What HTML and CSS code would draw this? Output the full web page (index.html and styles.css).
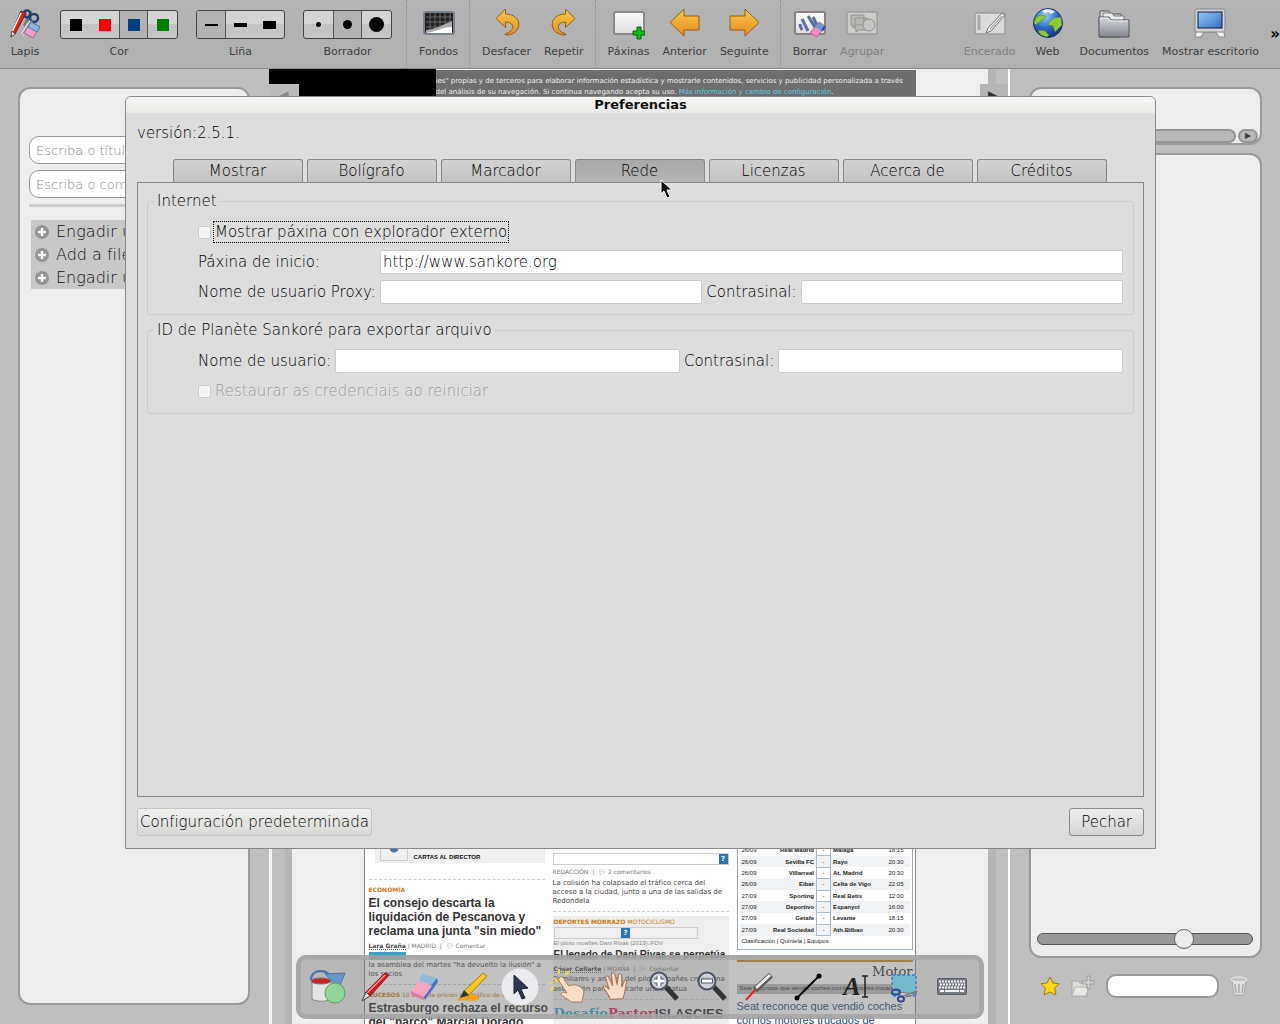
FILE: index.html
```html
<!DOCTYPE html>
<html lang="gl">
<head>
<meta charset="utf-8">
<title>Preferencias</title>
<link rel="stylesheet" href="styles.css">
</head>
<body>
<svg class="defs" width="0" height="0" aria-hidden="true">
  <defs>
    <linearGradient id="gold" x1="0" y1="0" x2="0" y2="1"><stop offset="0" stop-color="#f8c94a"/><stop offset="1" stop-color="#e58a22"/></linearGradient>
    <linearGradient id="paper" x1="0" y1="0" x2="0" y2="1"><stop offset="0" stop-color="#fdfdfd"/><stop offset="1" stop-color="#dcdcdc"/></linearGradient>
    <linearGradient id="screen" x1="0" y1="0" x2="1" y2="1"><stop offset="0" stop-color="#9cc8f4"/><stop offset="1" stop-color="#2f6cc4"/></linearGradient>
    <linearGradient id="folder" x1="0" y1="0" x2="0" y2="1"><stop offset="0" stop-color="#d6d8de"/><stop offset="1" stop-color="#84868e"/></linearGradient>
    <radialGradient id="globe" cx=".4" cy=".25" r=".8"><stop offset="0" stop-color="#9cd4f8"/><stop offset=".5" stop-color="#2f6fd0"/><stop offset="1" stop-color="#122a70"/></radialGradient>
    <symbol id="hand" viewBox="0 0 24 26"><path d="M7 24C6 19 2 16 1 13c0-2 3-1 5 2L3 5c0-2 2-2 3 0l3 7L8 2c0-2 2-2 3 0l2 9 1-8c0-2 2-2 3 0l0 10 2-5c1-2 3-1 2 1-1 5-1 9-3 14z" fill="#fbdcc4" stroke="#a9785c" stroke-width="1"/></symbol>
  </defs>
</svg>

<header class="toolbar">
  <div class="group">
    <button class="tool"><svg width="32" height="32" viewBox="0 0 32 32"><path d="M15 18 22 3M21 17 16 5" stroke="#777" stroke-width="2"/><circle cx="18" cy="6" r="3.500" fill="none" stroke="#1f4078" stroke-width="2.500"/><circle cx="25" cy="10" r="4" fill="none" stroke="#1f4078" stroke-width="2.500"/><path d="M22 13 13 27" stroke="#eee" stroke-width="3"/><path d="M22 13 13 27" stroke="#777"/><path d="M12 3l5 2L6 26l-4 3 1-6z" fill="#d8231b" stroke="#8e1c17"/><path d="M12 5 3 24" stroke="#fff" stroke-width="1.500"/><path d="M3 23l3 3-4 3z" fill="#eee" stroke="#555"/><path d="M22 14l9 5-7 11-9-5z" fill="#ee9fc6" stroke="#946b92"/><path d="M22 14l9 5-3 5-9-5z" fill="#8fb3dc" stroke="#567ba8"/></svg><span>Lapis</span></button>
    <div class="choice"><div class="cells"><button aria-label="Negro"><i class="swatch black"></i></button><button aria-label="Vermello"><i class="swatch red"></i></button><button class="on" aria-label="Azul"><i class="swatch blue"></i></button><button aria-label="Verde"><i class="swatch green"></i></button></div><span>Cor</span></div>
    <div class="choice"><div class="cells"><button class="on" aria-label="Fina"><i class="line thin"></i></button><button aria-label="Media"><i class="line medium"></i></button><button aria-label="Grosa"><i class="line thick"></i></button></div><span>Liña</span></div>
    <div class="choice"><div class="cells"><button aria-label="Pequeno"><i class="dot small"></i></button><button class="on" aria-label="Mediano"><i class="dot mid"></i></button><button aria-label="Grande"><i class="dot large"></i></button></div><span>Borrador</span></div>
  </div>
  <div class="group">
    <button class="tool"><svg width="32" height="32" viewBox="0 0 32 32"><rect x="1" y="4" width="30" height="22" rx="2" fill="#222" stroke="#7b828f" stroke-width="2"/><path d="M7 5v18M12 5v18M17 5v15M22 5v13M27 5v10M3 9h26M3 14h26M3 19h20" stroke="#777" stroke-width=".8"/><path d="M3 22c10-1 16-5 26-9v12H3z" fill="#aaa"/><path d="M3 25c9-1 16-6 26-6v6z" fill="#fff"/></svg><span>Fondos</span></button>
  </div>
  <div class="group">
    <button class="tool"><svg width="32" height="32" viewBox="0 0 32 32"><path d="M5 10.500 14.500 1v5C32 6 32 26 16 27c-2 0-3-1-1-1.500 9-2.500 9-11.500-.5-11.500v5.500z" fill="url(#gold)" stroke="#8a6016" stroke-linejoin="round"/></svg><span>Desfacer</span></button>
    <button class="tool"><svg width="32" height="32" viewBox="0 0 32 32"><path d="M27 10.500 17.500 1v5C0 6 0 26 16 27c2 0 3-1 1-1.500-9-2.500-9-11.500.5-11.500v5.500z" fill="url(#gold)" stroke="#8a6016" stroke-linejoin="round"/></svg><span>Repetir</span></button>
  </div>
  <div class="group">
    <button class="tool"><svg width="32" height="32" viewBox="0 0 32 32"><rect x="1" y="4" width="30" height="22" rx="2" fill="url(#paper)" stroke="#8b8888" stroke-width="2"/><path d="M24 19h4v4h4v4h-4v4h-4v-4h-4v-4h4z" fill="#14b814" stroke="#0a620a"/></svg><span>Páxinas</span></button>
    <button class="tool"><svg width="32" height="32" viewBox="0 0 32 32"><path d="M1 14.500 15 1v7h15v14H15v6z" fill="url(#gold)" stroke="#8a6016" stroke-linejoin="round"/></svg><span>Anterior</span></button>
    <button class="tool"><svg width="32" height="32" viewBox="0 0 32 32"><path d="M31 14.500 17 1v7H2v14h15v6z" fill="url(#gold)" stroke="#8a6016" stroke-linejoin="round"/></svg><span>Seguinte</span></button>
  </div>
  <div class="group">
    <button class="tool"><svg width="32" height="32" viewBox="0 0 32 32"><rect x="1" y="4" width="30" height="22" rx="2" fill="url(#paper)" stroke="#8b8080" stroke-width="2"/><path d="M6 16c0 2 1 4 2 6M8 11l6 12M14 8l8 13M19 9l4 8" stroke="#5b70a0" stroke-width="3" fill="none"/><path d="M25 14l6 4-8 11-7-4z" fill="#f08ac0" stroke="#c05090" stroke-width=".8"/><path d="M25 14l6 4-3 5-7-4z" fill="#6f9ac4"/><path d="M31 18l-3 5" stroke="#2048d0" stroke-width="2"/></svg><span>Borrar</span></button>
    <button class="tool" disabled><svg width="32" height="32" viewBox="0 0 32 32"><rect x="1" y="4" width="30" height="22" rx="2" fill="#cdcdcb" stroke="#a09f9d" stroke-width="1.500"/><path d="M5 7h13v10h-8l-3 3v-3H5zM9 10h12v12h-8l-3 2v-3H9z" fill="#b9b9b7" stroke="#93928f"/><circle cx="23" cy="17" r="6" fill="#c5c5c3" stroke="#93928f"/></svg><span>Agrupar</span></button>
  </div>
  <div class="group modes">
    <button class="tool" disabled><svg width="32" height="32" viewBox="0 0 32 32"><rect x="1" y="5" width="30" height="21" rx="2" fill="#dadad8" stroke="#a09f9d" stroke-width="1.500"/><path d="M5 7v15" stroke="#aaa" stroke-width="3"/><path d="M28 5l3 2-14 16-5 2 2-5z" fill="#e8e8e8" stroke="#777"/><path d="M16 21 28 8" stroke="#888"/></svg><span>Encerado</span></button>
    <button class="tool web"><svg width="32" height="32" viewBox="0 0 32 32"><circle cx="16" cy="15" r="14.500" fill="url(#globe)" stroke="#19306c"/><path d="M10 3c4-3 10-2 13 1l-4 2-3-2-3 1z" fill="#eef8ff"/><path d="M4 9l5-2 5 1-3 4-4 2-3 3-2-2zM17 14l5-4 7-1 1 8-4 4-3 3-2-6-5-1zM6 22l7 1 4 4-2 2c-5-1-8-3-9-7z" fill="#8fc83a" stroke="#4b8423" stroke-width=".6"/></svg><span>Web</span></button>
    <button class="tool"><svg width="32" height="32" viewBox="0 0 32 32"><path d="M2 29V3h9l2 3h10v23z" fill="#ddd" stroke="#55565a"/><path d="M5 28V5h9l2 3h10v20z" fill="#eee" stroke="#77787c"/><path d="M1 29V9h10l2 3h18v17z" fill="url(#folder)" stroke="#505258"/><path d="M2 10h8l2 3h18" fill="none" stroke="#eee"/></svg><span>Documentos</span></button>
    <button class="tool"><svg width="32" height="32" viewBox="0 0 32 32"><path d="M3 21 1 29h6l3-5h12l3 5h6l-2-8z" fill="#f4f4f4" stroke="#88898c"/><rect x="1" y="1" width="30" height="23" rx="2" fill="#d2d4d8" stroke="#85868b"/><rect x="4" y="4" width="24" height="16" fill="url(#screen)" stroke="#101a30"/></svg><span>Mostrar escritorio</span></button>
  </div>
  <button class="more" aria-label="Máis">»</button>
</header>

<main class="workspace">
  <aside class="side left">
    <div class="panel upload">
      <input class="pill" type="text" aria-label="Título" placeholder="Escriba o título">
      <input class="pill" type="text" aria-label="Comentario" placeholder="Escriba o comentario">
      <hr>
      <ul class="additions">
        <li><svg width="14" height="14" viewBox="0 0 14 14"><circle cx="7" cy="7" r="7" fill="#949494"/><path d="M7 3v8M3 7h8" stroke="#fff" stroke-width="2.500"/></svg>Engadir unha páxina</li>
        <li><svg width="14" height="14" viewBox="0 0 14 14"><circle cx="7" cy="7" r="7" fill="#949494"/><path d="M7 3v8M3 7h8" stroke="#fff" stroke-width="2.500"/></svg>Add a file</li>
        <li><svg width="14" height="14" viewBox="0 0 14 14"><circle cx="7" cy="7" r="7" fill="#949494"/><path d="M7 3v8M3 7h8" stroke="#fff" stroke-width="2.500"/></svg>Engadir unha ligazón</li>
      </ul>
    </div>
  </aside>

  <section class="board">
    <div class="rail"></div>
    <article class="webpage">
      <p class="cookies">ies" propias y de terceros para elaborar información estadística y mostrarle contenidos, servicios y publicidad personalizada a través<br>del análisis de su navegación. Si continua navegando acepta su uso. <a href="#">Más información y cambio de configuración</a>.</p>
      <div class="news">
        <div class="column first">
          <div class="letters"><i class="thumb"></i>CARTAS AL DIRECTOR</div>
          <div class="rule"></div>
          <p class="kicker">ECONOMÍA</p>
          <h3>El consejo descarta la<br>liquidación de Pescanova y<br>reclama una junta "sin miedo"</h3>
          <p class="meta"><b>Lara Graña</b> | MADRID &nbsp;|&nbsp; 💬&#xFE0E; Comentar</p>
          <p class="body"><mark>Pescanova</mark><br>la asamblea del martes "ha devuelto la ilusión" a los socios</p>
          <div class="rule"></div>
          <p class="kicker">SUCESOS <span>10 años de prisión por tráfico de drogas</span></p>
          <h3>Estrasburgo rechaza el recurso<br>del "narco" Marcial Dorado</h3>
        </div>
        <div class="column second">
          <div class="missing"><b>?</b></div>
          <p class="meta">REDACCIÓN &nbsp;|&nbsp; 💬&#xFE0E; 2 comentarios</p>
          <p class="body">La colisión ha colapsado el tráfico cerca del acceso a la ciudad, junto a una de las salidas de Redondela</p>
          <div class="rule"></div>
          <div class="story">
            <p class="kicker">DEPORTES MORRAZO <span>MOTOCICLISMO</span></p>
            <div class="missing short"><b>?</b></div>
            <p class="caption">El piloto moañés Dani Rivas (2013)./FDV</p>
            <h3>El legado de Dani Rivas se perpetúa</h3>
            <p class="meta"><b>César Collarte</b> | MOAÑA &nbsp;|&nbsp; 💬&#xFE0E; Comentar</p>
            <p class="body">Familiares y amigos del piloto moañés crean una asociación para dedicarle una estatua</p>
            <div class="rule"></div>
            <p class="promo"><span class="cyan">Desafío</span><span class="pink">Pastor</span><b>ISLASCIES</b></p>
          </div>
        </div>
        <div class="column third">
          <div class="scores">
            <table>
              <tr><td>26/09</td><th>Real Madrid</th><td class="vs">-</td><th>Málaga</th><td>18:15</td></tr>
              <tr><td>26/09</td><th>Sevilla FC</th><td class="vs">-</td><th>Rayo</th><td>20:30</td></tr>
              <tr><td>26/09</td><th>Villarreal</th><td class="vs">-</td><th>At. Madrid</th><td>20:30</td></tr>
              <tr><td>26/09</td><th>Eibar</th><td class="vs">-</td><th>Celta de Vigo</th><td>22:05</td></tr>
              <tr><td>27/09</td><th>Sporting</th><td class="vs">-</td><th>Real Betis</th><td>12:00</td></tr>
              <tr><td>27/09</td><th>Deportivo</th><td class="vs">-</td><th>Espanyol</th><td>16:00</td></tr>
              <tr><td>27/09</td><th>Getafe</th><td class="vs">-</td><th>Levante</th><td>18:15</td></tr>
              <tr><td>27/09</td><th>Real Sociedad</th><td class="vs">-</td><th>Ath.Bilbao</th><td>20:30</td></tr>
            </table>
            <p>Clasificación | Quiniela | Equipos</p>
          </div>
          <h2>Motor</h2>
          <p class="alt">Seat reconoce que vendió coches con los motores trucados</p>
          <h4>Seat reconoce que vendió coches con los motores trucados de</h4>
        </div>
      </div>
    </article>
    <div class="rail right"></div>
    <div class="corner"><span>◀</span></div>
    <div class="corner end"><span>▶</span></div>
  </section>

  <aside class="side right">
    <div class="panel paths"><div class="scroll"><i></i><button aria-label="Seguinte">▶</button></div></div>
    <div class="panel library"><input class="slider" type="range" min="0" max="100" value="70" aria-label="Tamaño"></div>
    <div class="actions">
      <svg width="20" height="20" viewBox="0 0 20 20"><path d="M10 1l3 6 6 .7-4.500 4.500L16 19l-6-3-6 3 1.500-6.800L1 7.700 7 7z" fill="#fbd914" stroke="#9c7a12" stroke-linejoin="round"/></svg>
      <svg width="24" height="22" viewBox="0 0 24 22"><path d="M1 21V6h6l2 2h7v13z" fill="#dcdcda" stroke="#a5a5a3"/><path d="M1 21 4 12h14l-3 9z" fill="#e6e6e4" stroke="#b0b0ae"/><path d="M16 1h3v5h5v3h-5v5h-3V9h-5V6h5z" fill="#cfcfcd" stroke="#999"/></svg>
      <input class="search" type="text" aria-label="Buscar">
      <svg width="18" height="20" viewBox="0 0 18 20"><path d="M2 4h14l-2 15H4z" fill="#dededc" stroke="#aaa"/><ellipse cx="9" cy="3.500" rx="8" ry="2.500" fill="#c4c4c4" stroke="#f0f0f0"/><path d="M5 8l1 9M9 8v9M13 8l-1 9" stroke="#aaa" stroke-width="1.500"/></svg>
    </div>
  </aside>

  <nav class="palette" aria-label="Ferramentas">
    <button aria-label="Fondo"><svg width="38" height="34" viewBox="0 0 38 34"><path d="M3 12h19v17c-4 3-15 3-19 0z" fill="#e4e4e4" stroke="#888"/><ellipse cx="12" cy="11" rx="10" ry="3" fill="#c62820" stroke="#777"/><path d="M2 10c0-12 18-11 20-2" fill="none" stroke="#4b76a8" stroke-width="2.500"/><path d="M16 4l20-1-6 15z" fill="#6597cb" stroke="#4775a6"/><circle cx="26" cy="23" r="10" fill="#94d69a" stroke="#55a45d"/></svg></button>
    <button aria-label="Lapis"><svg width="32" height="32" viewBox="0 0 32 32"><path d="M25 2l4 2L11 24l-8 5 3-8z" fill="#d21d1d" stroke="#8c1616"/><path d="M25 4 7 22" stroke="#ff9b93" stroke-width="1.500"/><path d="M6 21l4 4-8 5z" fill="#ddd" stroke="#444"/></svg></button>
    <button aria-label="Borrador"><svg width="32" height="32" viewBox="0 0 32 32"><path d="M14 3l15 4-4 7-14-4z" fill="#91b9d8"/><path d="M29 7l1 4-13 18-2-5z" fill="#4a72cc"/><path d="M11 10l13 5-8 11-13-6z" fill="#f6a6bf"/><path d="M3 20l13 6v3L3 24z" fill="#e47aa4"/></svg></button>
    <button aria-label="Marcador"><svg width="32" height="32" viewBox="0 0 32 32"><path d="M2 29c8-4 16 2 20-2-4-3-8-2-12-1" fill="none" stroke="#f2a21b" stroke-width="3"/><path d="M27 2l4 3L13 24l-7 2 2-6z" fill="#fbc91e" stroke="#a47a10"/><path d="M8 19l5 5-9 3z" fill="#333"/></svg></button>
    <button aria-label="Seleccionar"><svg width="38" height="38" viewBox="0 0 38 38"><circle cx="19" cy="19" r="18.500" fill="#ebebef"/><path d="M13 7l14 13-7 1 4 9-3 1-4-9-4 4z" fill="#2e3650" stroke="#222838"/></svg></button>
    <button aria-label="Interactuar"><svg width="38" height="36" viewBox="0 0 38 36"><path d="M9 13 5 9m-2 5H0M10 5V0m6 6 4-4M4 18l-3 3" stroke="#f0dc38" stroke-width="2"/><path d="M11 8c2-1 4 1 5 4l4 5c5-3 14 0 15 6l-2 10H22c-2-3-9-5-10-8 0-2 3-2 6-1L10 12c-1-2 0-3 1-4z" fill="#fbdcc4" stroke="#a9785c"/></svg></button>
    <button aria-label="Desprazar"><svg width="28" height="30"><use href="#hand"/></svg></button>
    <button aria-label="Achegar"><svg width="34" height="34" viewBox="0 0 34 34"><path d="M19 17 30 29" stroke="#333" stroke-width="5"/><circle cx="12" cy="11" r="8.500" fill="#d8dde4" fill-opacity=".7" stroke="#4c5468" stroke-width="2"/><path d="M12 6v10M7 11h10" stroke="#4c5468" stroke-width="5"/><path d="M12 6v10M7 11h10" stroke="#fff" stroke-width="3"/></svg></button>
    <button aria-label="Afastar"><svg width="34" height="34" viewBox="0 0 34 34"><path d="M19 17 30 29" stroke="#333" stroke-width="5"/><circle cx="12" cy="11" r="8.500" fill="#d8dde4" fill-opacity=".7" stroke="#4c5468" stroke-width="2"/><path d="M6 11h12" stroke="#4c5468" stroke-width="5"/><path d="M7 11h10" stroke="#fff" stroke-width="3"/></svg></button>
    <button aria-label="Láser"><svg width="32" height="32" viewBox="0 0 32 32"><path d="M2 29 12 18" stroke="#e22" stroke-width="2"/><path d="M11 19 27 4" stroke="#5b5b5b" stroke-width="6"/><path d="M12 17 26 4" stroke="#eee" stroke-width="3"/></svg></button>
    <button aria-label="Liña"><svg width="30" height="30" viewBox="0 0 30 30"><path d="M4 26 26 4" stroke="#000" stroke-width="2"/><circle cx="4" cy="26" r="2.500"/><circle cx="26" cy="4" r="2.500"/></svg></button>
    <button class="text" aria-label="Texto">A<svg width="8" height="24" viewBox="0 0 8 24"><path d="M1 1h6M1 22h6M4 1v21" stroke="#222" stroke-width="1.500"/></svg></button>
    <button aria-label="Capturar"><svg width="30" height="32" viewBox="0 0 30 32"><path d="M3 4h24v21H3z" fill="#76b9cc" stroke="#397fe0" stroke-width="1.500" stroke-dasharray="3 2"/><path d="M8 21l20 2-12 3M8 27l20-7-12 5" fill="#ccc" stroke="#777"/><ellipse cx="7" cy="21" rx="4" ry="2.500" fill="none" stroke="#37488c" stroke-width="2"/><ellipse cx="12" cy="28" rx="3" ry="2.500" fill="none" stroke="#37488c" stroke-width="2"/></svg></button>
    <button aria-label="Teclado"><svg width="30" height="18" viewBox="0 0 30 18"><rect x=".5" y=".5" width="29" height="16" rx="1" fill="#777b86" stroke="#5a5d66"/><path d="M2 3.500h26M3 6.500h25M2 9.500h26" stroke="#f4f4f4" stroke-width="2" stroke-dasharray="2 1"/><path d="M3 13h4m1 0h14m1 0h4" stroke="#f4f4f4" stroke-width="2"/></svg></button>
  </nav>

  <form class="dialog" role="dialog" aria-labelledby="dialog-title">
    <h1 id="dialog-title">Preferencias</h1>
    <div class="content">
      <p class="version">versión:2.5.1.</p>
      <div class="tabs" role="tablist">
        <button type="button" role="tab">Mostrar</button>
        <button type="button" role="tab">Bolígrafo</button>
        <button type="button" role="tab">Marcador</button>
        <button type="button" role="tab" class="current" aria-selected="true">Rede<svg class="pointer" width="12" height="20" viewBox="0 0 12 20"><path d="M1 1v14l3-3 3 7 3-1-3-7h5z" fill="#111" stroke="#fff"/></svg></button>
        <button type="button" role="tab">Licenzas</button>
        <button type="button" role="tab">Acerca de</button>
        <button type="button" role="tab">Créditos</button>
      </div>
      <div class="pane">
        <fieldset>
          <legend>Internet</legend>
          <div class="fields">
            <div class="check"><input type="checkbox" id="external"><label class="focus" for="external">Mostrar páxina con explorador externo</label></div>
            <label for="home">Páxina de inicio:</label><input class="wide" id="home" type="text" value="http://www.sankore.org">
            <label for="proxy">Nome de usuario Proxy:</label><input id="proxy" type="text"><label for="proxy-pass">Contrasinal:</label><input id="proxy-pass" type="password">
          </div>
        </fieldset>
        <fieldset>
          <legend>ID de Planète Sankoré para exportar arquivo</legend>
          <div class="fields">
            <label for="user">Nome de usuario:</label><input id="user" type="text"><label for="pass">Contrasinal:</label><input id="pass" type="password">
            <div class="check"><input type="checkbox" id="restore" disabled><label for="restore">Restaurar as credenciais ao reiniciar</label></div>
          </div>
        </fieldset>
      </div>
      <div class="buttons"><button type="button" class="flat">Configuración predeterminada</button><button type="button">Pechar</button></div>
    </div>
  </form>
</main>
</body>
</html>
```
FILE: styles.css
```css
* { box-sizing: border-box; }
body, p, h1, h2, h3, h4, ul, table { margin: 0; padding: 0; }
button, input { font: inherit; color: inherit; margin: 0; }
button { padding: 0; border: 0; background: none; }
svg { display: block; flex: none; }
.defs { position: absolute; }

body {
  display: flex;
  flex-direction: column;
  height: 100vh;
  min-width: 1280px;
  overflow: hidden;
  background: #bfbfbf;
  color: #404040;
  font-family: "DejaVu Sans", sans-serif;
  font-size: 15px;
}

/* Main toolbar */
.toolbar {
  display: flex;
  flex: none;
  height: 69px;
  background: linear-gradient(#b4b4b4, #b0b0b0);
  border-bottom: 1px solid #888;
  font-size: 11px;
  line-height: 14px;
}
.group { display: flex; align-items: flex-start; gap: 1px; padding: 8px 5px 0 6px; }
.group + .group { border-left: 1px dotted #8e8e8e; }
.group:first-child { padding-left: 3px; padding-right: 14px; }
.group.modes { margin-left: auto; border: 0; padding-right: 1px; }
.tool { display: flex; flex-direction: column; align-items: center; gap: 5px; padding: 0 6px; }
.web { min-width: 50px; }
.tool:disabled { color: #808080; }
.choice { display: flex; flex-direction: column; align-items: center; gap: 6px; padding-top: 2px; margin-left: 17px; }
.choice:nth-child(2) { margin-left: 12px; }
.cells { display: flex; height: 29px; border: 1px solid #444; border-radius: 3px; overflow: hidden; background: linear-gradient(#d4d4d4 48%, #c4c4c4 50%); }
.cells button { display: flex; align-items: center; justify-content: center; width: 29px; }
.cells .on { background: #b2b2b2; border-left: 1px solid #555; border-right: 1px solid #555; }
.cells .on:first-child { border-left: 0; }
.swatch { width: 12px; height: 12px; }
.black { background: #000; }
.red { background: #f00; }
.blue { background: #004080; }
.green { background: #008000; }
.line { width: 13px; background: #000; }
.thin { height: 2px; }
.medium { height: 4px; }
.thick { height: 8px; }
.dot { border-radius: 50%; background: #000; }
.small { width: 5px; height: 5px; }
.mid { width: 9px; height: 9px; }
.large { width: 15px; height: 15px; }
.more { width: 14px; color: #000; font-size: 15px; font-weight: bold; text-align: right; }

/* Workspace */
.workspace { position: relative; flex: 1; display: flex; min-height: 0; }
.side { display: flex; flex-direction: column; flex: none; }
.side.left { width: 269px; padding: 18px 19px 19px 18px; }
.side.right { width: 270px; padding: 18px 18px 26px 19px; gap: 8px; }
.panel { border: 2px solid #999; border-radius: 12px; background: #ededed; }
.upload { flex: 1; padding: 47px 9px; }
.pill { display: block; width: 100%; height: 28px; margin-bottom: 6px; padding: 0 6px; border: 1px solid #999; border-radius: 10px; background: #fff; font-size: 13px; font-weight: 200; }
.pill::placeholder { color: #888; }
.upload hr { height: 3px; margin: 6px 0 13px; border: 0; background: #ccc; }
.additions { margin-left: 2px; background: #c8c8c8; color: #111; list-style: none; font-size: 16px; font-weight: 200; white-space: nowrap; overflow: hidden; }
.additions li { display: flex; align-items: center; gap: 7px; height: 23px; padding-left: 4px; }
.paths { display: flex; height: 58px; align-items: flex-end; }
.scroll { display: flex; gap: 2px; width: 100%; padding-right: 2px; }
.scroll i { flex: 1; height: 14px; border: 2px solid #959595; border-radius: 7px; background: #b8b8b8; }
.scroll button { width: 20px; height: 14px; border: 2px solid #959595; border-radius: 7px; background: #b8b8b8; font-size: 8px; line-height: 10px; }
.library { display: flex; flex: 1; align-items: flex-end; padding: 0 7px 7px 6px; }
.slider { -webkit-appearance: none; appearance: none; width: 100%; height: 20px; background: none; }
.slider::-webkit-slider-runnable-track { height: 12px; border: 1px solid #555; border-radius: 6px; background: #999; }
.slider::-webkit-slider-thumb { -webkit-appearance: none; width: 20px; height: 20px; margin-top: -5px; border: 1px solid #666; border-radius: 50%; background: #eee; }
.actions { display: flex; align-items: center; gap: 11px; height: 24px; margin-top: 8px; padding: 0 14px 0 11px; }
.search { flex: 1; min-width: 0; height: 24px; border: 2px solid #999; border-radius: 10px; background: #fff; }

/* Captured web page */
.board { position: relative; display: flex; flex: 1; overflow: hidden; }
.rail { width: 23px; border-left: 3px solid #f4f4f4; background: linear-gradient(90deg, #bfbfbf 13px, #b5b5b5 13px); }
.rail.right { border-left: 0; border-right: 2px solid #fff; background: linear-gradient(90deg, #b5b5b5 8px, #c0c0c0 8px); }
.webpage { display: flex; flex: 1; flex-direction: column; padding: 0 72px; background: #eee; }
.cookies { height: 28px; padding: 6px 0 0 72px; border-top: 1px solid #fff; background: #6e6e6e; box-shadow: inset 72px 0 #000; color: #eee; font: 7px/11px "DejaVu Sans", sans-serif; white-space: nowrap; overflow: hidden; }
.cookies a { color: #55cfe5; text-decoration: none; }
.corner { position: absolute; left: 0; top: 0; width: 167px; height: 28px; border-top: 15px solid #000; background: linear-gradient(90deg, #bbb 30px, #000 30px); color: #888; font-size: 15px; line-height: 24px; padding-left: 8px; }
.corner.end { left: auto; right: 2px; width: 28px; border-top-color: transparent; border-top-left-radius: 4px; background: #b5b5b5; background-clip: padding-box; color: #333; }
.news { display: flex; gap: 8px; height: 180px; margin-top: auto; padding: 0 2px 0 4px; border: 1px solid #888; border-width: 0 1px; background: #fff; overflow: hidden; }
.column { width: 176px; flex: none; }
.column.first { padding-top: 4px; }
.column.second { padding-top: 9px; }
.column.third { flex: 1; }
.letters { display: flex; gap: 6px; height: 15px; margin-left: 6px; padding-left: 5px; background: #f0f0f0; color: #111; font: bold 6px/18px "Liberation Sans", sans-serif; }
.thumb { width: 28px; height: 13px; border: 1px solid #ccc; border-top: 0; background: radial-gradient(circle at 13px 0, #3b73b5 4px, transparent 5px); }
.rule { height: 1px; border-top: 1px dashed #ccc; }
.first .rule { margin-top: 16px; }
.first .body + .rule { margin-top: 5px; }
.kicker { margin-top: 4px; color: #c87a14; font-weight: bold; font-size: 6px; line-height: 10px; }
.first .kicker { margin-top: 5px; }
.kicker span { font-weight: normal; }
.news h3 { color: #333; font: bold 12px/14px "Liberation Sans", sans-serif; margin: 1px 0 3px; white-space: nowrap; }
.meta { color: #777; font-size: 6px; line-height: 10px; }
.meta b { color: #444; border-bottom: 1px dotted #666; }
.body { color: #444; font-size: 7px; line-height: 9px; }
.first .body { margin-top: 1px; }
.body mark { background: #35a4c4; color: #35a4c4; }
.missing { height: 12px; border: 1px solid #ccc; background: #fff; text-align: right; font-size: 7px; line-height: 10px; }
.missing b { display: inline-block; width: 9px; height: 10px; background: #2b73b8; color: #fff; text-align: center; }
.missing + .meta { margin: 2px 0; }
.missing.short { width: 144px; background: none; text-align: center; }
.second > .rule { margin: 5px 0 4px; }
.story { height: 130px; padding-left: 1px; background: #eee; }
.story .kicker { margin: 0; padding-top: 1px; }
.caption { color: #888; font: 6px/8px "Liberation Sans", sans-serif; }
.news .story h3 { font-size: 10px; margin: 1px 0 2px; }
.story .body { line-height: 10px; }
.story .rule { margin: 5px 0; }
.promo { font: bold 13px/18px "DejaVu Serif", serif; white-space: nowrap; }
.promo b { color: #333; font-family: "Liberation Sans", sans-serif; }
.cyan { color: #2aa9c4; }
.pink { color: #cf2e64; }
.scores { height: 106px; padding: 0 2px; border: 1px solid #9cb0c4; border-top: 0; }
.scores table { width: 100%; height: 92px; table-layout: fixed; border-collapse: collapse; font: 6px/8px "Liberation Sans", sans-serif; color: #222; }
.scores tr:nth-child(even) { background: #f0f2f4; }
.scores td, .scores th { padding: 0 2px; text-align: left; white-space: nowrap; }
.scores td:first-child { width: 22px; }
.scores th:nth-child(2) { width: 55px; text-align: right; }
.scores .vs { width: 14px; border: 1px solid #a9bacb; padding: 0; text-align: center; }
.scores td:last-child { width: 26px; text-align: right; padding-right: 6px; }
.scores p { padding: 1px 2px; color: #222; font: 6px/8px "Liberation Sans", sans-serif; }
.third h2 { margin-top: 10px; border-top: 2px solid #c68830; color: #333; font: 13px/20px "DejaVu Serif", serif; text-align: right; }
.alt { margin-top: 2px; height: 10px; padding-left: 3px; background: #bbb; color: #333; font: 6px/9px "Liberation Sans", sans-serif; white-space: nowrap; }
.third h4 { margin-top: 5px; color: #1f4b7d; font: 11px/14px "Liberation Sans", sans-serif; }

/* Floating drawing palette */
.palette { position: absolute; left: 50%; bottom: 5px; display: flex; width: 688px; height: 64px; margin-left: -344px; padding: 0 3px; border: 5px solid rgba(160, 160, 160, .9); border-radius: 10px; background: rgba(110, 110, 110, .42); background-clip: padding-box; }
.palette button { display: flex; flex: 1; align-items: center; justify-content: center; }
.palette .text { color: #222; font: italic bold 26px "Liberation Serif", serif; }

/* Preferences dialog */
.dialog { position: absolute; inset: 27px 124px 175px 125px; display: flex; flex-direction: column; border: 1px solid #888; border-radius: 6px 6px 0 0; background: #ddd; color: #000; font-weight: 200; line-height: 18px; overflow: hidden; }
.dialog h1 { height: 16px; background: linear-gradient(#f6f6f4, #eaeae8); color: #111; font-size: 13px; line-height: 15px; text-align: center; }
.content { display: flex; flex: 1; flex-direction: column; padding: 11px 11px 12px; }
.version { padding-bottom: 17px; }
.tabs { display: flex; justify-content: center; gap: 4px; padding-right: 2px; }
.tabs button { position: relative; width: 130px; height: 23px; border: 1px solid #888; border-width: 1px 1px 0; border-radius: 3px 3px 0 0; background: linear-gradient(#d2d2d2, #c2c2c2); }
.tabs .current { background: linear-gradient(#a8a8a8, #b4b4b4); }
.pointer { position: absolute; left: 84px; top: 19px; z-index: 1; }
.pane { flex: 1; padding: 9px; border: 1px solid #888; }
fieldset { margin: 0 0 6px; padding: 10px 10px 10px 50px; border: 1px solid #ccc; border-radius: 3px; }
legend { margin-left: -44px; padding: 0 3px; }
.fields { display: grid; grid-template-columns: auto 1fr auto 1fr; align-items: center; gap: 6px 4px; }
.fields input { min-width: 0; width: 100%; height: 24px; padding: 0 2px; border: 1px solid #ccc; border-radius: 2px; background: #fff; }
.fields .wide { grid-column: span 3; }
.fields .check { display: flex; grid-column: 1 / -1; align-items: center; gap: 2px; height: 24px; }
.fields .check input { -webkit-appearance: none; appearance: none; width: 13px; height: 13px; padding: 0; background: #f6f6f6; }
.check label { padding: 1px; border: 1px solid transparent; }
.check .focus { border: 1px dotted #000; }
.check input:disabled + label { color: #999; text-shadow: 1px 1px #e8e8e8; }
.buttons { display: flex; justify-content: space-between; margin-top: 11px; }
.buttons button { height: 28px; padding: 0 11px; border: 1px solid #8c8c8c; border-radius: 3px; background: linear-gradient(#eee, #d4d4d4); }
.buttons .flat { padding: 0 2px; border-color: #c4c4c4; background: linear-gradient(#f0f0ee, #d8d8d6); }
```
